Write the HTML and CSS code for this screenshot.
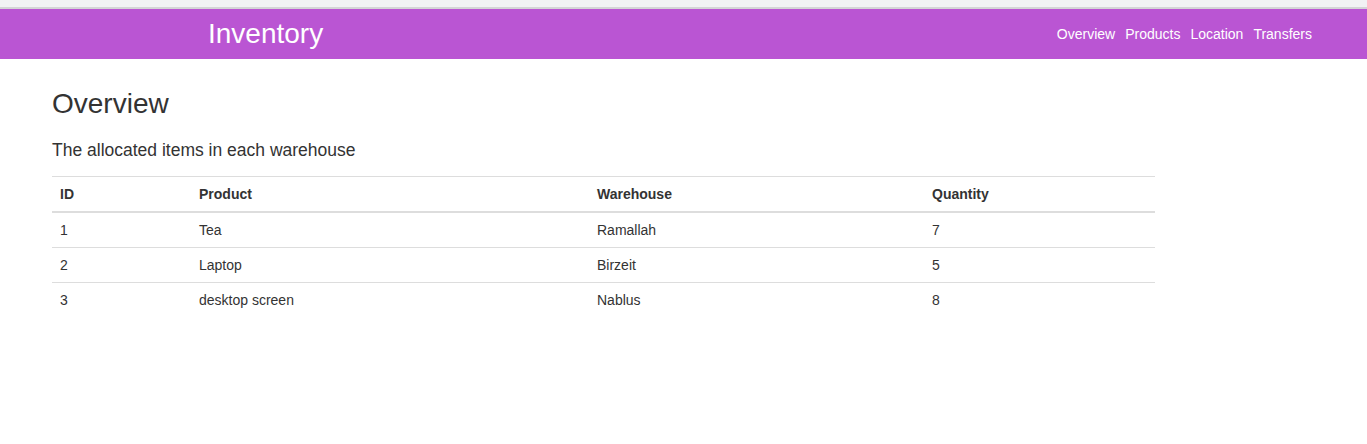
FILE: index.html
```html
<!DOCTYPE html>
<html lang="en">
<head>
<meta charset="utf-8">
<title>Inventory</title>
<link rel="stylesheet" href="styles.css">
</head>
<body>
<div class="topstrip"></div>
<nav class="navbar">
  <a class="brand" href="#">Inventory</a>
  <ul class="nav">
    <li><a href="#">Overview</a></li>
    <li><a href="#">Products</a></li>
    <li><a href="#">Location</a></li>
    <li><a href="#">Transfers</a></li>
  </ul>
</nav>
<main class="content">
  <h1 class="title">Overview</h1>
  <p class="lead">The allocated items in each warehouse</p>
  <table class="table">
    <colgroup>
      <col class="c-id">
      <col class="c-product">
      <col class="c-warehouse">
      <col class="c-qty">
    </colgroup>
    <thead>
      <tr><th>ID</th><th>Product</th><th>Warehouse</th><th>Quantity</th></tr>
    </thead>
    <tbody>
      <tr><td>1</td><td>Tea</td><td>Ramallah</td><td>7</td></tr>
      <tr><td>2</td><td>Laptop</td><td>Birzeit</td><td>5</td></tr>
      <tr><td>3</td><td>desktop screen</td><td>Nablus</td><td>8</td></tr>
    </tbody>
  </table>
</main>
</body>
</html>
```

FILE: styles.css
```css
* { box-sizing: border-box; }
html, body { margin: 0; padding: 0; background: #fff; }
body {
  font-family: "Liberation Sans", Arial, sans-serif;
  font-size: 14px;
  color: #333;
}
.topstrip {
  height: 9px;
  background: #f1f2f4;
  border-bottom: 2px solid #d3d4d6;
}
.navbar {
  height: 50px;
  background: #ba55d3;
  display: flex;
  align-items: center;
  justify-content: space-between;
  padding: 0 55px 0 208px;
}
.brand {
  color: #fff;
  text-decoration: none;
  font-size: 28px;
  line-height: 50px;
}
.nav {
  list-style: none;
  margin: 0;
  padding: 0;
  display: flex;
  gap: 10px;
}
.nav a {
  color: #fff;
  text-decoration: none;
  font-size: 14px;
  line-height: 50px;
}
.content {
  padding: 28px 0 0 52px;
}
.title {
  margin: 0;
  font-size: 28px;
  font-weight: normal;
  line-height: 34px;
  color: #333;
}
.lead {
  margin: 17px 0 14px;
  font-size: 17.5px;
  line-height: 24px;
  color: #333;
}
.table {
  width: 1103px;
  border-collapse: collapse;
  table-layout: fixed;
}
.c-id { width: 139px; }
.c-product { width: 398px; }
.c-warehouse { width: 335px; }
.c-qty { width: 231px; }
.table th,
.table td {
  text-align: left;
  padding: 8px;
  line-height: 18px;
  font-size: 14px;
  border-top: 1px solid #ddd;
  color: #333;
}
.table th {
  font-weight: bold;
  border-bottom: 2px solid #ddd;
}
.table thead + tbody tr:first-child td { border-top: 0; }
```
